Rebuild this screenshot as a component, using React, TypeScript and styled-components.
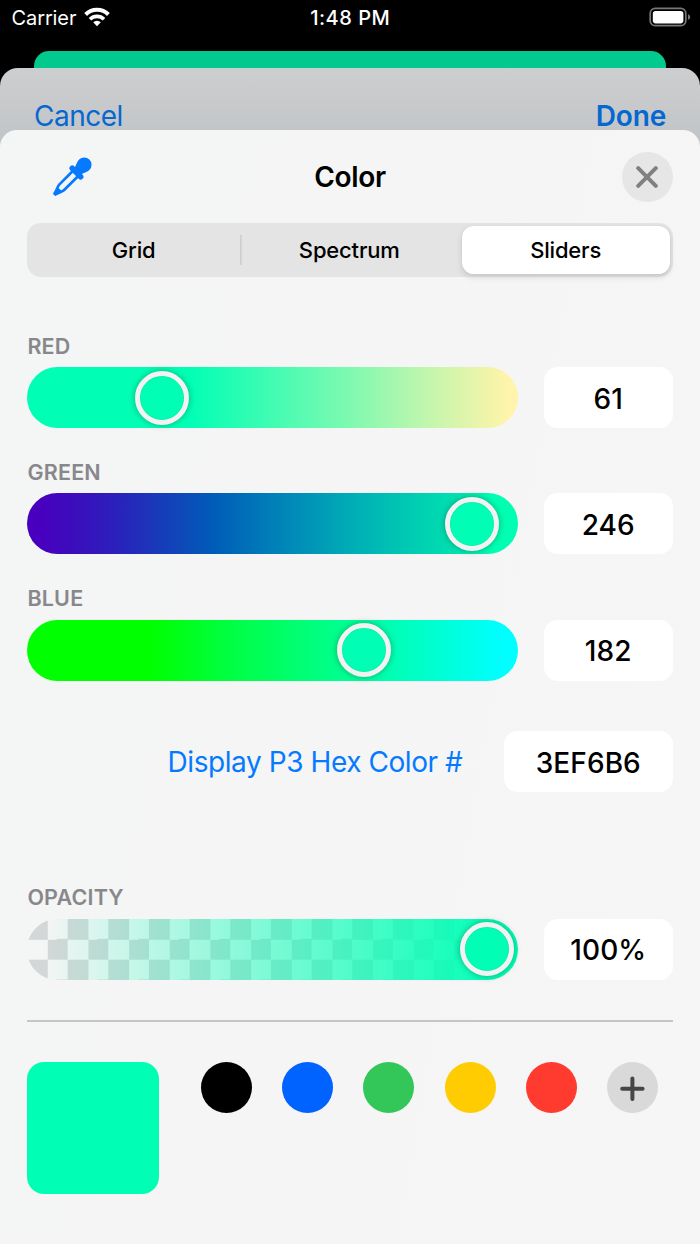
import React from "react";
import styled, { createGlobalStyle } from "styled-components";

const GlobalStyle = createGlobalStyle`
  *, *::before, *::after { box-sizing: border-box; }
  html, body { margin: 0; padding: 0; background: #000; }
  body { font-family: Inter, "Liberation Sans", sans-serif; -webkit-font-smoothing: antialiased; }
  button { border: 0; padding: 0; margin: 0; background: none; font: inherit; color: inherit; }
`;

const Screen = styled.div`
  width: 700px;
  height: 1244px;
  overflow: hidden;
  display: flex;
  flex-direction: column;
  background: #000;
`;

const StatusBar = styled.header`
  height: 51px;
  flex: none;
  display: grid;
  grid-template-columns: 1fr auto 1fr;
  align-items: start;
  padding: 6px 9px 0 11.5px;
  color: #fff;
  font-size: 20px;
  line-height: 24px;
`;

const Carrier = styled.div`
  display: flex;
  gap: 8px;
  letter-spacing: -0.1px;
`;

const Clock = styled.div`
  font-weight: 500;
  margin-left: -2px;
  letter-spacing: 0.5px;
`;

const Battery = styled.div`
  justify-self: end;
  display: flex;
`;

const BackCard = styled.div`
  height: 50px;
  flex: none;
  margin: 0 34px;
  border-radius: 15px 15px 0 0;
  background: #02ca8e;
`;

const ParentSheet = styled.section`
  height: 100px;
  flex: none;
  margin-top: -33px;
  padding: 31px 34px 0;
  display: flex;
  justify-content: space-between;
  align-items: flex-start;
  border-radius: 18px 18px 0 0;
  background: linear-gradient(#cdced0, #c3c6c8 62px);
  color: #0568d0;
  font-size: 28px;
  line-height: 34px;
  z-index: 1;
`;

const NavButton = styled.button<{ $strong?: boolean }>`
  font-weight: ${(p) => (p.$strong ? 600 : 400)};
  letter-spacing: ${(p) => (p.$strong ? "-0.2px" : "-0.5px")};
`;

const Sheet = styled.main`
  flex: 1;
  margin-top: -38.3px;
  padding: 22px 27.4px 0;
  display: flex;
  flex-direction: column;
  border-radius: 17px 17px 0 0;
  background: linear-gradient(100deg, #f4f5f5, #f5f5f5 50%, #f6f6f6);
  z-index: 2;
`;

const TitleRow = styled.div`
  height: 50px;
  display: grid;
  grid-template-columns: 1fr auto 1fr;
  align-items: center;
`;

const DropperButton = styled.button`
  width: 44px;
  height: 44px;
  margin-left: 23px;
  display: block;
`;

const Title = styled.h1`
  margin: 0;
  font-size: 28px;
  font-weight: 600;
  letter-spacing: -0.3px;
`;

const CloseButton = styled.button`
  justify-self: end;
  width: 50.5px;
  height: 50.5px;
  border-radius: 50%;
  background: #e6e6e6;
  display: grid;
  place-items: center;
`;

const Segments = styled.div`
  height: 53.5px;
  margin-top: 21.5px;
  padding: 3px;
  display: grid;
  grid-template-columns: 210px 1fr 208px;
  border-radius: 14px;
  background: #e4e4e4;
`;

const Segment = styled.button<{ $active?: boolean; $divided?: boolean }>`
  display: flex;
  align-items: center;
  justify-content: center;
  padding-right: ${(p) => (p.$active ? 0 : 3.5)}px;
  font-size: 22px;
  font-weight: 500;
  color: #000;
  letter-spacing: -0.18px;
  border-radius: 11.5px;
  ${(p) => p.$active && "background: #fff; box-shadow: 0 3px 6px rgba(0,0,0,.13), 0 0 1px rgba(0,0,0,.15);"}
  ${(p) =>
    p.$divided &&
    "background: linear-gradient(#cfcfd0, #cfcfd0) 0 50% / 1.7px 30px no-repeat; border-radius: 0;"}
`;

const Channel = styled.section<{ $top: number }>`
  margin-top: ${(p) => p.$top}px;
`;

const Label = styled.div`
  height: 26px;
  margin-bottom: 8.6px;
  font-size: 21.5px;
  line-height: 26.5px;
  font-weight: 600;
  color: #88888c;
  letter-spacing: 0.2px;
`;

const ChannelRow = styled.div`
  display: flex;
  justify-content: space-between;
`;

const Track = styled.div<{ $fill: string }>`
  width: 490.2px;
  height: 61px;
  border-radius: 31px;
  padding: 3.7px;
  background: ${(p) => p.$fill};
`;

const Thumb = styled.div`
  width: 54px;
  height: 54px;
  border-radius: 50%;
  border: 5px solid #f2f2f2;
  background: #00ffb5;
  background-clip: padding-box;
  box-shadow: 0 0 7px rgba(0, 0, 0, 0.3), inset 0 0 1px rgba(0, 0, 0, 0.3);
`;

const Field = styled.div<{ $width?: number }>`
  width: ${(p) => p.$width ?? 128.7}px;
  height: 61px;
  border-radius: 13.5px;
  background: #fff;
  display: flex;
  align-items: center;
  justify-content: center;
  padding-top: 2.5px;
  font-size: 28px;
  font-weight: 500;
  color: #000;
  letter-spacing: 0.1px;
`;

const HexRow = styled.div`
  margin-top: 50.4px;
  display: flex;
  justify-content: flex-end;
  align-items: center;
  gap: 41.5px;
`;

const HexLabel = styled.button`
  padding-top: 1px;
  font-size: 28px;
  color: #067aff;
  letter-spacing: -0.43px;
`;

const Rule = styled.hr`
  width: 100%;
  height: 1.8px;
  border: 0;
  margin: 40.4px 0 0;
  background: #c5c5c6;
`;

const Palette = styled.div`
  margin-top: 40.4px;
  display: flex;
`;

const CurrentColor = styled.div`
  width: 131.7px;
  height: 131.7px;
  border-radius: 17px;
  background: #00ffb5;
`;

const Swatches = styled.div`
  margin-left: 42px;
  display: flex;
  gap: 30.2px;
`;

const Swatch = styled.button<{ $color: string }>`
  width: 51px;
  height: 51px;
  border-radius: 50%;
  background: ${(p) => p.$color};
  display: grid;
  place-items: center;
`;

const checker =
  "conic-gradient(rgba(205,209,211,0) 25%, #d4d7d8 0 50%, rgba(205,209,211,0) 0 75%, #d4d7d8 0) 0 0 / 40.66px 40.66px";

const channels = [
  {
    name: "RED",
    value: "61",
    offset: 107.5,
    fill: "linear-gradient(90deg, #00ffb5 33%, #80f9b0 66%, #c0f6ad 81%, #fff4a9 98%)",
  },
  {
    name: "GREEN",
    value: "246",
    offset: 417.3,
    fill: "linear-gradient(90deg, #4800be 3%, #2b20bb 18%, #005cb8 38%, #0085b8 52%, #00adb6 66%, #00deb0 86%, #00ffb2 95%)",
  },
  {
    name: "BLUE",
    value: "182",
    offset: 309.8,
    fill: "linear-gradient(90deg, #00ff00 25%, #00ff48 43%, #00ff8c 63%, #00ffc0 78%, #00ffff 97%)",
  },
];

const palette = ["#000000", "#0062ff", "#33c75a", "#ffcc02", "#ff3b30"];

const WifiIcon = () => (
  <svg width="26" height="20" viewBox="0 0 26 20" style={{ display: "block", marginTop: 1 }}>
    <g fill="none" stroke="#fff" strokeWidth="4">
      <path d="M1.600 7.500a16.300 16.300 0 0 1 22.800 0" />
      <path d="M6 12.200a10 10 0 0 1 14 0" strokeWidth="3.600" />
    </g>
    <path fill="#fff" d="M13 19.200l-3.800-3.900a5.400 5.400 0 0 1 7.600 0z" />
  </svg>
);

const BatteryIcon = () => (
  <svg width="42" height="20" viewBox="0 0 42 20" style={{ display: "block", marginTop: 1 }}>
    <rect x="1.2" y="1.3" width="35.600" height="17.400" rx="5" fill="none" stroke="#777" strokeWidth="1.7" />
    <rect x="3.8" y="3.900" width="30.600" height="12.500" rx="2.8" fill="#fff" />
    <path d="M39 7.2c1.6.5 2.2 1.6 2.2 2.8s-.6 2.3-2.2 2.8z" fill="#777" />
  </svg>
);

const DropperIcon = () => (
  <svg width="44" height="44" viewBox="-22 -22 44 44" overflow="visible" style={{ display: "block" }}>
    <g transform="translate(-.2 .2) rotate(45) scale(.94)">
      <path
        fill="#067aff"
        d="M0-26.500a7.800 7.800 0 0 1 7.800 7.800c0 3.200-2 5.500-2.500 8.700h1a3 3 0 0 1 0 6H-6.300a3 3 0 0 1 0-6H-5.300c-.5-3.200-2.500-5.500-2.500-8.700A7.800 7.800 0 0 1 0-26.500z"
      />
      <path
        fill="none"
        stroke="#067aff"
        strokeWidth="2.8"
        strokeLinejoin="round"
        d="M-3.900-5V15C-3.900 18-1.600 20.500-.8 25.300H.8C1.600 20.500 3.900 18 3.900 15V-5"
      />
      <path fill="#067aff" d="M-2.600 18H2.600L1 25H-1z" />
    </g>
  </svg>
);

const CloseIcon = () => (
  <svg width="22" height="22" viewBox="0 0 22 22">
    <path d="M2.200 2.200l17.600 17.600M19.800 2.200L2.200 19.800" stroke="#808083" strokeWidth="4" strokeLinecap="round" />
  </svg>
);

const PlusIcon = () => (
  <svg width="26" height="26" viewBox="0 0 26 26">
    <path d="M13 2.800v20.400M2.800 13h20.400" transform="translate(-.6 .8)" stroke="#464648" strokeWidth="4" strokeLinecap="round" />
  </svg>
);

export default function App() {
  return (
    <>
      <GlobalStyle />
      <Screen>
        <StatusBar>
          <Carrier>
            Carrier <WifiIcon />
          </Carrier>
          <Clock>1:48 PM</Clock>
          <Battery>
            <BatteryIcon />
          </Battery>
        </StatusBar>
        <BackCard />
        <ParentSheet>
          <NavButton>Cancel</NavButton>
          <NavButton $strong>Done</NavButton>
        </ParentSheet>
        <Sheet>
          <TitleRow>
            <DropperButton aria-label="Pick color">
              <DropperIcon />
            </DropperButton>
            <Title>Color</Title>
            <CloseButton aria-label="Close">
              <CloseIcon />
            </CloseButton>
          </TitleRow>
          <Segments>
            <Segment>Grid</Segment>
            <Segment $divided>Spectrum</Segment>
            <Segment $active>Sliders</Segment>
          </Segments>
          {channels.map((c, i) => (
            <Channel key={c.name} $top={i === 0 ? 56 : 30.6}>
              <Label>{c.name}</Label>
              <ChannelRow>
                <Track $fill={c.fill}>
                  <Thumb style={{ marginLeft: c.offset - 3.7 }} />
                </Track>
                <Field>{c.value}</Field>
              </ChannelRow>
            </Channel>
          ))}
          <HexRow>
            <HexLabel>Display P3 Hex Color #</HexLabel>
            <Field $width={168.7}>3EF6B6</Field>
          </HexRow>
          <Channel $top={92}>
            <Label>OPACITY</Label>
            <ChannelRow>
              <Track $fill={`linear-gradient(90deg, rgba(0,255,181,0) 17px, #00ffb5 473px), ${checker}`}>
                <Thumb style={{ marginLeft: 428.8 }} />
              </Track>
              <Field>100%</Field>
            </ChannelRow>
          </Channel>
          <Rule />
          <Palette>
            <CurrentColor />
            <Swatches>
              {palette.map((color) => (
                <Swatch key={color} $color={color} aria-label={color} />
              ))}
              <Swatch $color="#d9d9d9" aria-label="Add color">
                <PlusIcon />
              </Swatch>
            </Swatches>
          </Palette>
        </Sheet>
      </Screen>
    </>
  );
}
